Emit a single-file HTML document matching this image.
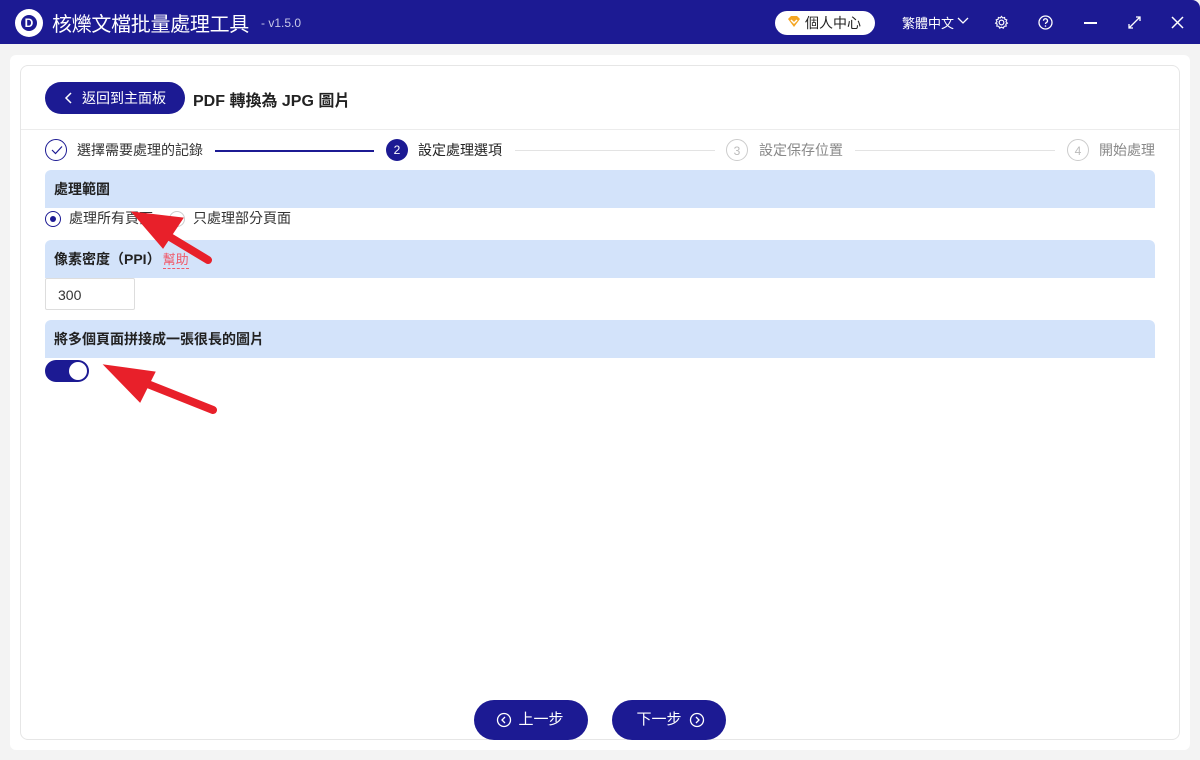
<!DOCTYPE html>
<html><head><meta charset="utf-8"><style>
*{margin:0;padding:0;box-sizing:border-box}
body{width:1200px;height:760px;background:#f3f3f3;font-family:"Liberation Sans","Noto Sans CJK TC",sans-serif;position:relative;overflow:hidden;color:#222}
.top{position:absolute;left:0;top:0;width:1200px;height:44px;background:#1c1a93;border-radius:0 8px 0 0}
.abs{position:absolute}
.outer{position:absolute;left:10px;top:55px;width:1180px;height:695px;background:#fff;border-radius:6px}
.card{position:absolute;left:20px;top:65px;width:1160px;height:675px;border:1px solid #e6e6e6;border-radius:8px;background:#fff}
.sec{position:absolute;left:45px;width:1110px;height:38px;background:#d3e3fa;border-radius:6px 6px 0 0;font-size:14px;font-weight:bold;padding-left:9px;line-height:38px;color:#222}
.btn{position:absolute;background:#1c1a93;color:#fff;border-radius:20px;font-size:15px;text-align:center}
.circ{position:absolute;width:22px;height:22px;border-radius:50%;text-align:center;line-height:22px;font-size:12px}
</style></head><body>
<div class="top"></div>
<div class="abs" style="left:15px;top:9px;width:28px;height:28px;border-radius:50%;background:#fff;"></div>
<div class="abs" style="left:21px;top:15px;width:16px;height:16px;border-radius:50%;background:#1c1a93;color:#fff;font-weight:bold;font-size:12px;text-align:center;line-height:16px">D</div>
<div class="abs" style="left:52px;top:8px;color:#fff;font-size:20px;letter-spacing:-0.3px">核爍文檔批量處理工具</div>
<div class="abs" style="left:261px;top:16px;color:#c8c8e8;font-size:12px;">- v1.5.0</div>
<div class="abs" style="left:775px;top:11px;width:100px;height:24px;background:#fff;border-radius:12px;font-size:14px;line-height:24px;padding-left:30px;color:#222">個人中心</div>
<svg class="abs" style="left:787px;top:16px" width="14" height="12"><path d="M1 3L4 0H10L13 3L7 11Z" fill="#f5a623"/><path d="M4 4L7 7L10 4" stroke="#fff" stroke-width="1.5" fill="none"/></svg>
<div class="abs" style="left:902px;top:13px;color:#fff;font-size:13px;">繁體中文</div>
<svg class="abs" style="left:957px;top:17px" width="12" height="8"><path d="M1 1L6 6L11 1" stroke="#fff" stroke-width="1.3" fill="none"/></svg>
<svg class="abs" style="left:994px;top:15px" width="15" height="15" viewBox="0 0 16 16"><circle cx="8" cy="8" r="2.5" stroke="#fff" stroke-width="1.3" fill="none"/><path d="M8 1.5L9.3 3.2L11.3 2.6L11.6 4.6L13.6 5.2L12.8 7.2L14.3 8.7L12.6 9.8L13 11.9L10.9 12L10 14L8 13L6 14L5.1 12L3 11.9L3.4 9.8L1.7 8.7L3.2 7.2L2.4 5.2L4.4 4.6L4.7 2.6L6.7 3.2Z" stroke="#fff" stroke-width="1.2" fill="none"/></svg>
<svg class="abs" style="left:1038px;top:15px" width="15" height="15"><circle cx="7.5" cy="7.5" r="6.5" stroke="#fff" stroke-width="1.3" fill="none"/><path d="M5.5 5.8a2 2 0 1 1 2.8 1.8c-.6.3-.8.7-.8 1.4" stroke="#fff" stroke-width="1.3" fill="none"/><circle cx="7.5" cy="11" r=".8" fill="#fff"/></svg>
<div class="abs" style="left:1084px;top:22px;width:13px;height:1.5px;background:#fff"></div>
<svg class="abs" style="left:1128px;top:16px" width="13" height="13"><path d="M1 12L12 1M8 1H12V5M1 8V12H5" stroke="#fff" stroke-width="1.3" fill="none"/></svg>
<svg class="abs" style="left:1171px;top:16px" width="13" height="13"><path d="M1 1L12 12M12 1L1 12" stroke="#fff" stroke-width="1.5"/></svg>
<div class="outer"></div>
<div class="card"></div>
<div class="btn" style="left:45px;top:82px;width:140px;height:32px;line-height:32px;font-size:14px;padding-left:18px">返回到主面板</div>
<svg class="abs" style="left:64px;top:92px" width="8" height="12"><path d="M7 1L2 6L7 11" stroke="#fff" stroke-width="1.5" fill="none"/></svg>
<div class="abs" style="left:193px;top:87px;font-size:16px;font-weight:bold;color:#222">PDF 轉換為 JPG 圖片</div>
<div class="abs" style="left:21px;top:129px;width:1158px;height:1px;background:#ececec"></div>
<div class="circ" style="left:45px;top:139px;border:1px solid #1c1a93"></div>
<svg class="abs" style="left:51px;top:145px" width="12" height="10"><path d="M1 5L4.5 8.5L11 1.5" stroke="#1c1a93" stroke-width="1.2" fill="none"/></svg>
<div class="abs" style="left:77px;top:140px;font-size:14px;color:#333">選擇需要處理的記錄</div>
<div class="abs" style="left:215px;top:150px;width:159px;height:1.5px;background:#1c1a93"></div>
<div class="circ" style="left:386px;top:139px;background:#1c1a93;color:#fff">2</div>
<div class="abs" style="left:418px;top:140px;font-size:14px;color:#222">設定處理選項</div>
<div class="abs" style="left:515px;top:150px;width:200px;height:1px;background:#e3e3e3"></div>
<div class="circ" style="left:726px;top:139px;border:1px solid #ccc;color:#bbb">3</div>
<div class="abs" style="left:759px;top:140px;font-size:14px;color:#888">設定保存位置</div>
<div class="abs" style="left:855px;top:150px;width:200px;height:1px;background:#e3e3e3"></div>
<div class="circ" style="left:1067px;top:139px;border:1px solid #ccc;color:#bbb">4</div>
<div class="abs" style="left:1099px;top:140px;font-size:14px;color:#888">開始處理</div>
<div class="sec" style="top:170px">處理範圍</div>
<div class="abs" style="left:45px;top:211px;width:16px;height:16px;border-radius:50%;border:1px solid #1c1a93"></div>
<div class="abs" style="left:50px;top:216px;width:6px;height:6px;border-radius:50%;background:#1c1a93"></div>
<div class="abs" style="left:69px;top:208px;font-size:14px;color:#333">處理所有頁面</div>
<div class="abs" style="left:169px;top:211px;width:16px;height:16px;border-radius:50%;border:1px solid #ccc"></div>
<div class="abs" style="left:193px;top:208px;font-size:14px;color:#333">只處理部分頁面</div>
<div class="sec" style="top:240px">像素密度（PPI）<span style="margin-left:2px;color:#f05a6a;font-weight:normal;font-size:13px;border-bottom:1px dashed #f05a6a;line-height:16px;display:inline-block">幫助</span></div>
<div class="abs" style="left:45px;top:278px;width:90px;height:32px;border:1px solid #ddd;border-radius:2px;font-size:14px;line-height:32px;padding-left:12px;color:#333">300</div>
<div class="sec" style="top:320px">將多個頁面拼接成一張很長的圖片</div>
<div class="abs" style="left:45px;top:360px;width:44px;height:22px;border-radius:11px;background:#1c1a93"></div>
<div class="abs" style="left:69px;top:362px;width:18px;height:18px;border-radius:50%;background:#fff"></div>
<svg class="abs" style="left:0;top:0" width="1200" height="760">
<g fill="#e8202a" stroke="#e8202a" stroke-linecap="round">
<line x1="208" y1="260" x2="150" y2="225" stroke-width="8"/>
<polygon points="132,212 183,218 163,248"/>
<line x1="213" y1="410" x2="125" y2="375" stroke-width="8"/>
<polygon points="104,365 155,372 140,402"/>
</g></svg>
<div class="btn" style="left:474px;top:700px;width:114px;height:40px;line-height:40px;padding-left:20px">上一步</div>
<svg class="abs" style="left:496px;top:712px" width="16" height="16"><circle cx="8" cy="8" r="6.5" stroke="#fff" stroke-width="1.3" fill="none"/><path d="M9 5L6 8L9 11" stroke="#fff" stroke-width="1.3" fill="none"/></svg>
<div class="btn" style="left:612px;top:700px;width:114px;height:40px;line-height:40px;padding-right:20px">下一步</div>
<svg class="abs" style="left:689px;top:712px" width="16" height="16"><circle cx="8" cy="8" r="6.5" stroke="#fff" stroke-width="1.3" fill="none"/><path d="M7 5L10 8L7 11" stroke="#fff" stroke-width="1.3" fill="none"/></svg>
</body></html>
